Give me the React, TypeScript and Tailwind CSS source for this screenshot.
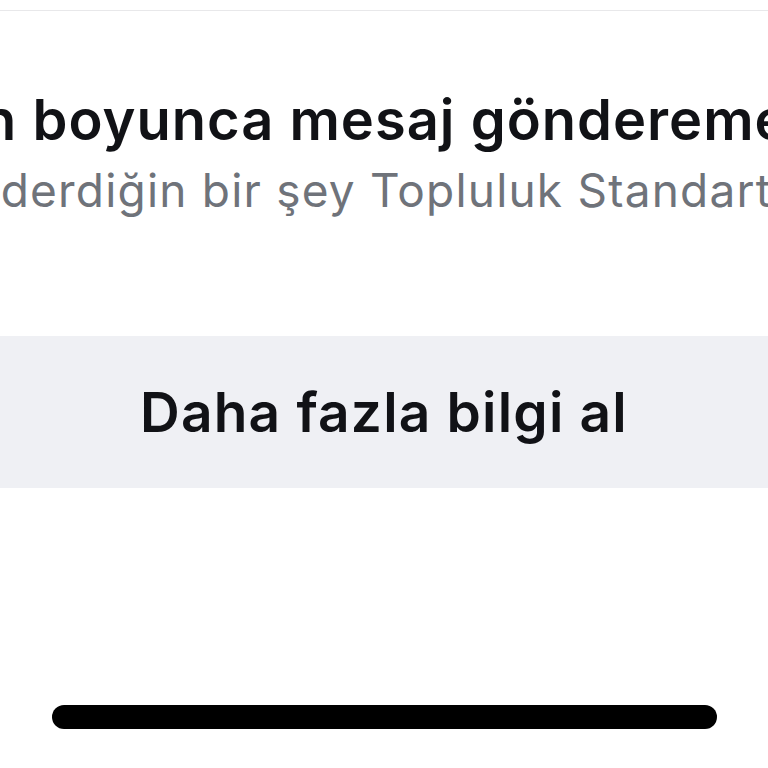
import React from "react";

export default function App() {
  return (
    <div
      className="w-[768px] h-[768px] bg-white overflow-hidden flex flex-col"
      style={{ fontFamily: "Inter, 'Noto Sans', sans-serif" }}
    >
      <div className="mt-[10px] h-px w-full bg-[#e8e8ea]" />
      <div className="mt-[81px] h-[56px] leading-[56px] text-[56px] font-semibold text-[#111216] whitespace-nowrap ml-[-129px] tracking-[1px]">
        1 gün boyunca mesaj gönderemezsin
      </div>
      <div className="mt-[19px] h-[46px] leading-[46px] text-[46px] font-normal text-[#6f737a] whitespace-nowrap ml-[-92px] tracking-[1.2px]">
        Gönderdiğin bir şey Topluluk Standartlarımıza uymuyor
      </div>
      <div className="mt-[123px] h-[152px] w-full bg-[#eff0f4] flex items-center justify-center">
        <span className="text-[55px] leading-[55px] font-semibold text-[#111216] whitespace-nowrap tracking-[1.2px]">
          Daha fazla bilgi al
        </span>
      </div>
      <div className="mt-[217px] flex justify-start">
        <div className="ml-[52px] w-[665px] h-[24px] rounded-full bg-black" />
      </div>
    </div>
  );
}
